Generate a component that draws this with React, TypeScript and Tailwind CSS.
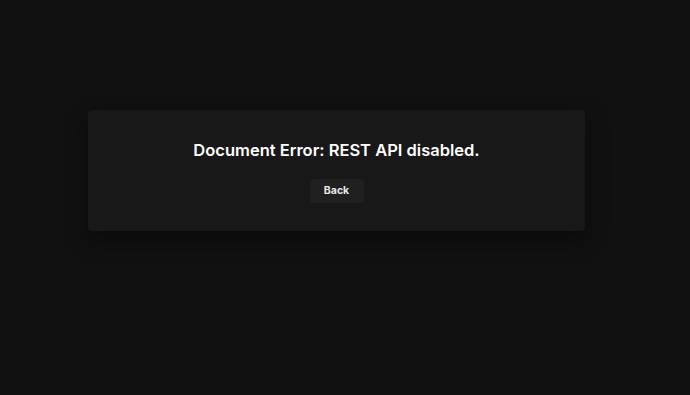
export default function App() {
  return (
    <div className="min-h-[395px] bg-[#111111] pt-[110px] font-['Inter',sans-serif]">
      <div className="ml-[88px] flex w-[497px] flex-col items-center rounded bg-[#181818] pt-[28px] pb-[28px] shadow-[0_8px_24px_rgba(0,0,0,0.45)]">
        <h1 className="text-[16.5px] font-semibold leading-[24px] text-white">
          Document Error: REST API disabled.
        </h1>
        <button className="mt-[17px] h-[24px] w-[54px] rounded bg-[#202020] text-[10.5px] font-bold text-[#e8e8e8]">
          Back
        </button>
      </div>
    </div>
  );
}
